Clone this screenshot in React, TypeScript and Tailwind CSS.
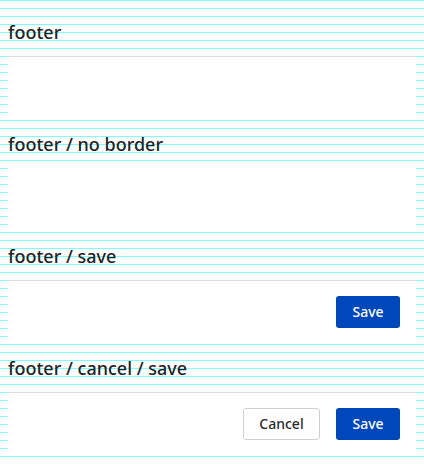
import React from 'react';

type Variant = {
  title: string;
  border: boolean;
  buttons: ('cancel' | 'save')[];
};

const variants: Variant[] = [
  { title: 'footer', border: true, buttons: [] },
  { title: 'footer / no border', border: false, buttons: [] },
  { title: 'footer / save', border: true, buttons: ['save'] },
  { title: 'footer / cancel / save', border: true, buttons: ['cancel', 'save'] },
];

const Footer: React.FC<{ border: boolean; buttons: ('cancel' | 'save')[] }> = ({ border, buttons }) => (
  <div
    className={
      border
        ? 'mx-2 flex h-16 items-center justify-end gap-4 border-t border-[#dddddd] bg-white px-4 pt-[15px] pb-4'
        : 'mx-2 flex h-16 items-center justify-end gap-4 bg-white px-4 py-4'
    }
  >
    {buttons.map((b) =>
      b === 'save' ? (
        <button
          key={b}
          className="h-8 w-16 rounded-[3px] bg-[#0047bb] text-center text-sm leading-8 font-medium text-white"
        >
          Save
        </button>
      ) : (
        <button
          key={b}
          className="h-8 w-[77px] rounded-[3px] border border-[#d0d0d0] bg-white text-center text-sm leading-[30px] font-medium text-[#2a2a2a]"
        >
          Cancel
        </button>
      )
    )}
  </div>
);

export default function App() {
  return (
    <div className="min-h-screen bg-white bg-[linear-gradient(to_bottom,#80ffff_1px,transparent_1px)] bg-[length:100%_8px] pt-2 font-['Noto_Sans',sans-serif]">
      {variants.map((v) => (
        <section key={v.title}>
          <h2 className="px-2 pt-3 pb-3 text-[18px] leading-6 font-medium text-[#222222]">{v.title}</h2>
          <Footer border={v.border} buttons={v.buttons} />
        </section>
      ))}
    </div>
  );
}
